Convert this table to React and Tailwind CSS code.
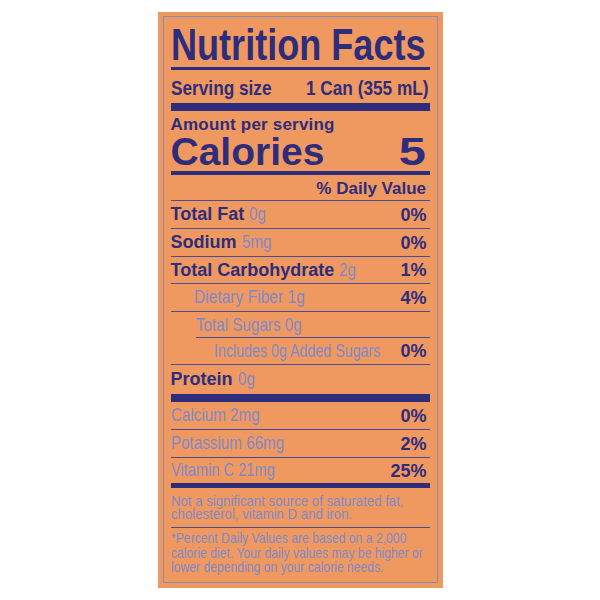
const WIDE = { fontFamily: "'Liberation Sans', Arial, sans-serif" };

function Light({ children, sx = "scale-x-[0.8]" }) {
  return (
    <span className={`inline-block origin-left ${sx} whitespace-nowrap text-[19px] font-normal text-[#7f89c8]`}>
      {children}
    </span>
  );
}

function Pct({ children }) {
  return (
    <span className="shrink-0 pr-[3px] text-[18px] font-bold leading-[18px] text-[#2e2d7b]">
      {children}
    </span>
  );
}

function Row({ h, children, right, border = true, indent = "" }) {
  return (
    <div className={`flex items-center ${h} ${border ? "border-b border-[#4a4c92]" : ""} ${indent}`}>
      <div className="min-w-0 flex-1 whitespace-nowrap leading-[18px]">{children}</div>
      {right ? <Pct>{right}</Pct> : null}
    </div>
  );
}

export default function App() {
  return (
    <div className="h-[600px] w-[600px] bg-white pt-[12px]" style={WIDE}>
      <div className="mx-auto h-[576px] w-[285px] bg-[#ef9961] px-[5px] pt-[4px] pb-[5px]">
        <div className="h-full overflow-hidden border border-[#8a8cb8] px-[7px] text-[#2e2d7b]">
          {/* Title */}
          <div className="h-[50px] pt-[6px] text-[44px] font-bold leading-[44px]">
            <span className="inline-block origin-left scale-x-[0.82] whitespace-nowrap">Nutrition Facts</span>
          </div>
          <div className="h-[3px] bg-[#2e2d7b]" />
          {/* Serving */}
          <div className="h-[33px] pt-[7px]">
            <div className="flex w-[316px] origin-left scale-x-[0.82] justify-between whitespace-nowrap pr-[2px] text-[21px] font-bold leading-[21px]">
              <span>Serving size</span>
              <span>1 Can (355 mL)</span>
            </div>
          </div>
          <div className="h-[8px] bg-[#2e2d7b]" />
          {/* Calories */}
          <div className="pt-[5px]">
            <div className="text-[17px] font-bold leading-[17px] tracking-[0.2px]">Amount per serving</div>
            <div className="flex justify-between text-[39px] font-bold leading-[38px]">
              <span>Calories</span>
              <span className="inline-block origin-right scale-x-[1.25] pr-[3px]">5</span>
            </div>
          </div>
          <div className="h-[4px] bg-[#2e2d7b]" />
          {/* DV header */}
          <div className="h-[26px] border-b border-[#4a4c92] pt-[5px] text-right text-[17px] font-bold leading-[17px]">
            % Daily Value<span className="align-top text-[9px] font-normal text-[#8f98d0]">*</span>
          </div>
          <Row h="h-[28px]" right="0%">
            <span className="text-[18px] font-bold">Total Fat </span>
            <Light>0g</Light>
          </Row>
          <Row h="h-[28px]" right="0%">
            <span className="text-[18px] font-bold">Sodium </span>
            <Light>5mg</Light>
          </Row>
          <Row h="h-[27px]" right="1%">
            <span className="text-[18px] font-bold">Total Carbohydrate </span>
            <Light>2g</Light>
          </Row>
          <Row h="h-[28px]" right="4%" indent="pl-[23px]">
            <Light sx="scale-x-[0.82]">Dietary Fiber 1g</Light>
          </Row>
          <div className="h-[26px] pl-[25px]">
            <div className="flex h-full items-center border-b border-[#4a4c92] leading-[18px]">
              <Light>Total Sugars 0g</Light>
            </div>
          </div>
          <Row h="h-[27px]" right="0%" indent="pl-[43px]">
            <Light sx="scale-x-[0.75]">Includes 0g Added Sugars</Light>
          </Row>
          <Row h="h-[29px]" border={false}>
            <span className="text-[18px] font-bold">Protein </span>
            <Light>0g</Light>
          </Row>
          <div className="h-[8px] bg-[#2e2d7b]" />
          <Row h="h-[28px]" right="0%">
            <Light>Calcium 2mg</Light>
          </Row>
          <Row h="h-[28px]" right="2%">
            <Light>Potassium 66mg</Light>
          </Row>
          <Row h="h-[25px]" right="25%" border={false}>
            <Light sx="scale-x-[0.77]">Vitamin C 21mg</Light>
          </Row>
          <div className="h-[5px] bg-[#2e2d7b]" />
          {/* Footnotes */}
          <div className="h-[40px] border-b border-[#4a4c92] pt-[7px]">
            <div className="w-[290px] origin-left scale-x-[0.91] whitespace-nowrap text-[14.5px] leading-[12.5px] text-[#7f89c8]">
              Not a significant source of saturated fat,
              <br />
              cholesterol, vitamin D and iron.
            </div>
          </div>
          <div className="pt-[3px]">
            <div className="w-[300px] origin-left scale-x-[0.84] whitespace-nowrap text-[14.5px] leading-[14.5px] text-[#7f89c8]">
              *Percent Daily Values are based on a 2,000
              <br />
              calorie diet. Your daily values may be higher or
              <br />
              lower depending on your calorie needs.
            </div>
          </div>
        </div>
      </div>
    </div>
  );
}
